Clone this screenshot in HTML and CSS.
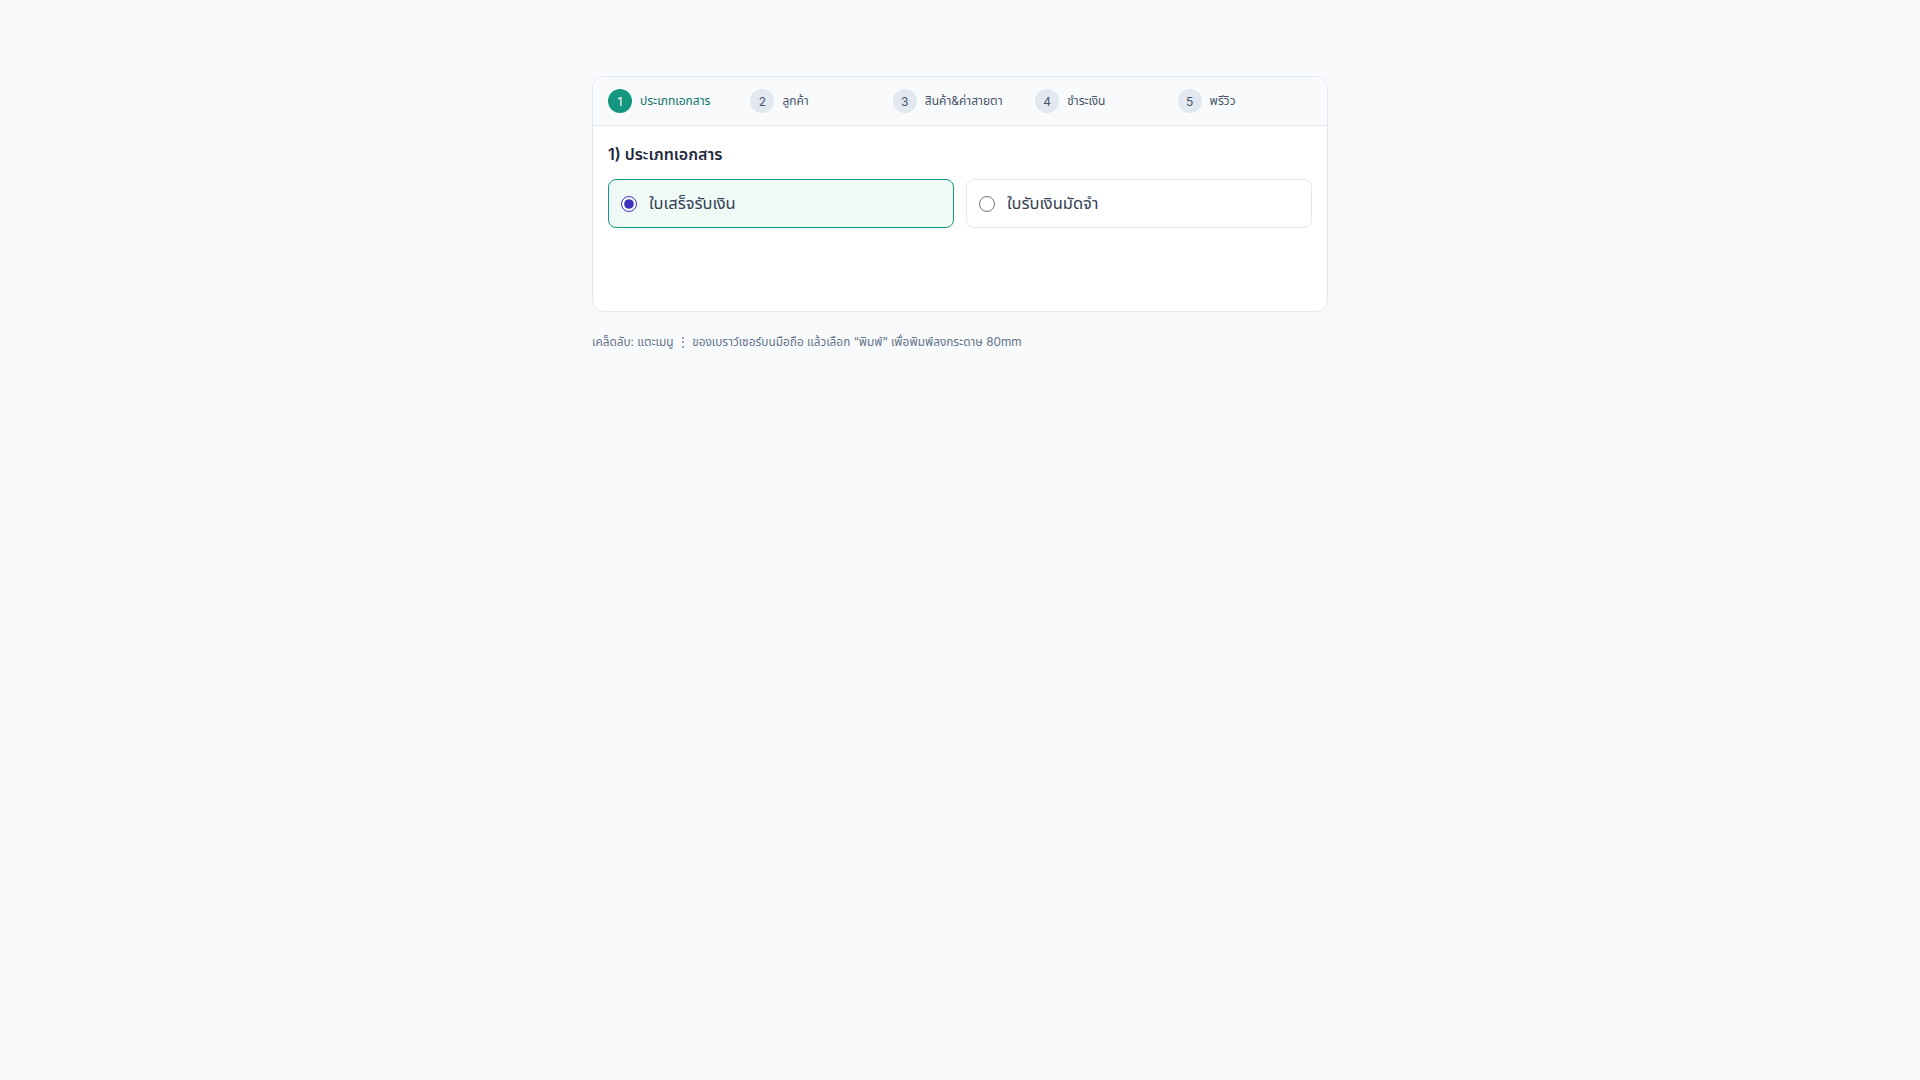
FILE: index.html
```html
<!DOCTYPE html>
<html lang="th">
<head>
<meta charset="utf-8">
<title>ประเภทเอกสาร</title>
<link rel="stylesheet" href="styles.css">
</head>
<body>
<main class="wrap">
  <section class="card">
    <nav class="steps">
      <div class="step active"><span class="num">1</span><span class="label">ประเภทเอกสาร</span></div>
      <div class="step"><span class="num">2</span><span class="label">ลูกค้า</span></div>
      <div class="step"><span class="num">3</span><span class="label">สินค้า&amp;ค่าสายตา</span></div>
      <div class="step"><span class="num">4</span><span class="label">ชำระเงิน</span></div>
      <div class="step"><span class="num">5</span><span class="label">พรีวิว</span></div>
    </nav>
    <div class="body">
      <h2 class="title">1) ประเภทเอกสาร</h2>
      <div class="options">
        <label class="option selected"><input type="radio" name="doc" checked><span>ใบเสร็จรับเงิน</span></label>
        <label class="option"><input type="radio" name="doc"><span>ใบรับเงินมัดจำ</span></label>
      </div>
      <div class="spacer"></div>
    </div>
  </section>
  <p class="tip">เคล็ดลับ: แตะเมนู ⋮ ของเบราว์เซอร์บนมือถือ แล้วเลือก “พิมพ์” เพื่อพิมพ์ลงกระดาษ 80mm</p>
</main>
</body>
</html>
```
FILE: styles.css
```css
* { box-sizing: border-box; }
html, body { margin: 0; padding: 0; }
body {
  background: #f8fafc;
  font-family: Inter, "Noto Sans Thai", "Noto Sans", sans-serif;
  color: #1e293b;
}
.wrap {
  width: 736px;
  margin: 76px auto 0;
}
.card {
  background: #ffffff;
  border: 1px solid #e2e8f0;
  border-radius: 12px;
  overflow: hidden;
}
.steps {
  display: grid;
  grid-template-columns: repeat(5, 1fr);
  gap: 8px;
  padding: 12px 15px;
  background: #f8fafc;
  border-bottom: 1px solid #e2e8f0;
}
.step {
  display: flex;
  align-items: center;
  gap: 8px;
  font-size: 12px;
  color: #475569;
}
.num {
  width: 24px;
  height: 24px;
  border-radius: 50%;
  background: #e2e8f0;
  color: #475569;
  display: flex;
  align-items: center;
  justify-content: center;
  font-size: 12px;
}
.step.active .num { background: #14967f; color: #ffffff; }
.step.active .label { color: #0f766e; }
.body { padding: 16px 15px 16px; }
.title {
  margin: 0 0 13px;
  font-size: 16px;
  font-weight: 600;
  line-height: 24px;
  color: #1e293b;
}
.options {
  display: grid;
  grid-template-columns: 1fr 1fr;
  gap: 12px;
}
.option {
  display: flex;
  align-items: center;
  gap: 12px;
  height: 49px;
  padding: 0 12px;
  border: 1px solid #e2e8f0;
  border-radius: 8px;
  background: #ffffff;
  font-size: 16.5px;
  color: #334155;
  cursor: pointer;
}
.option.selected {
  border-color: #14967f;
  background: #effaf6;
}
.option input {
  margin: 0;
  width: 16px;
  height: 16px;
  accent-color: #3b34c0;
}
.spacer { height: 67px; }
.tip {
  margin: 21px 0 0;
  font-size: 11.85px;
  color: #64748b;
}
```
